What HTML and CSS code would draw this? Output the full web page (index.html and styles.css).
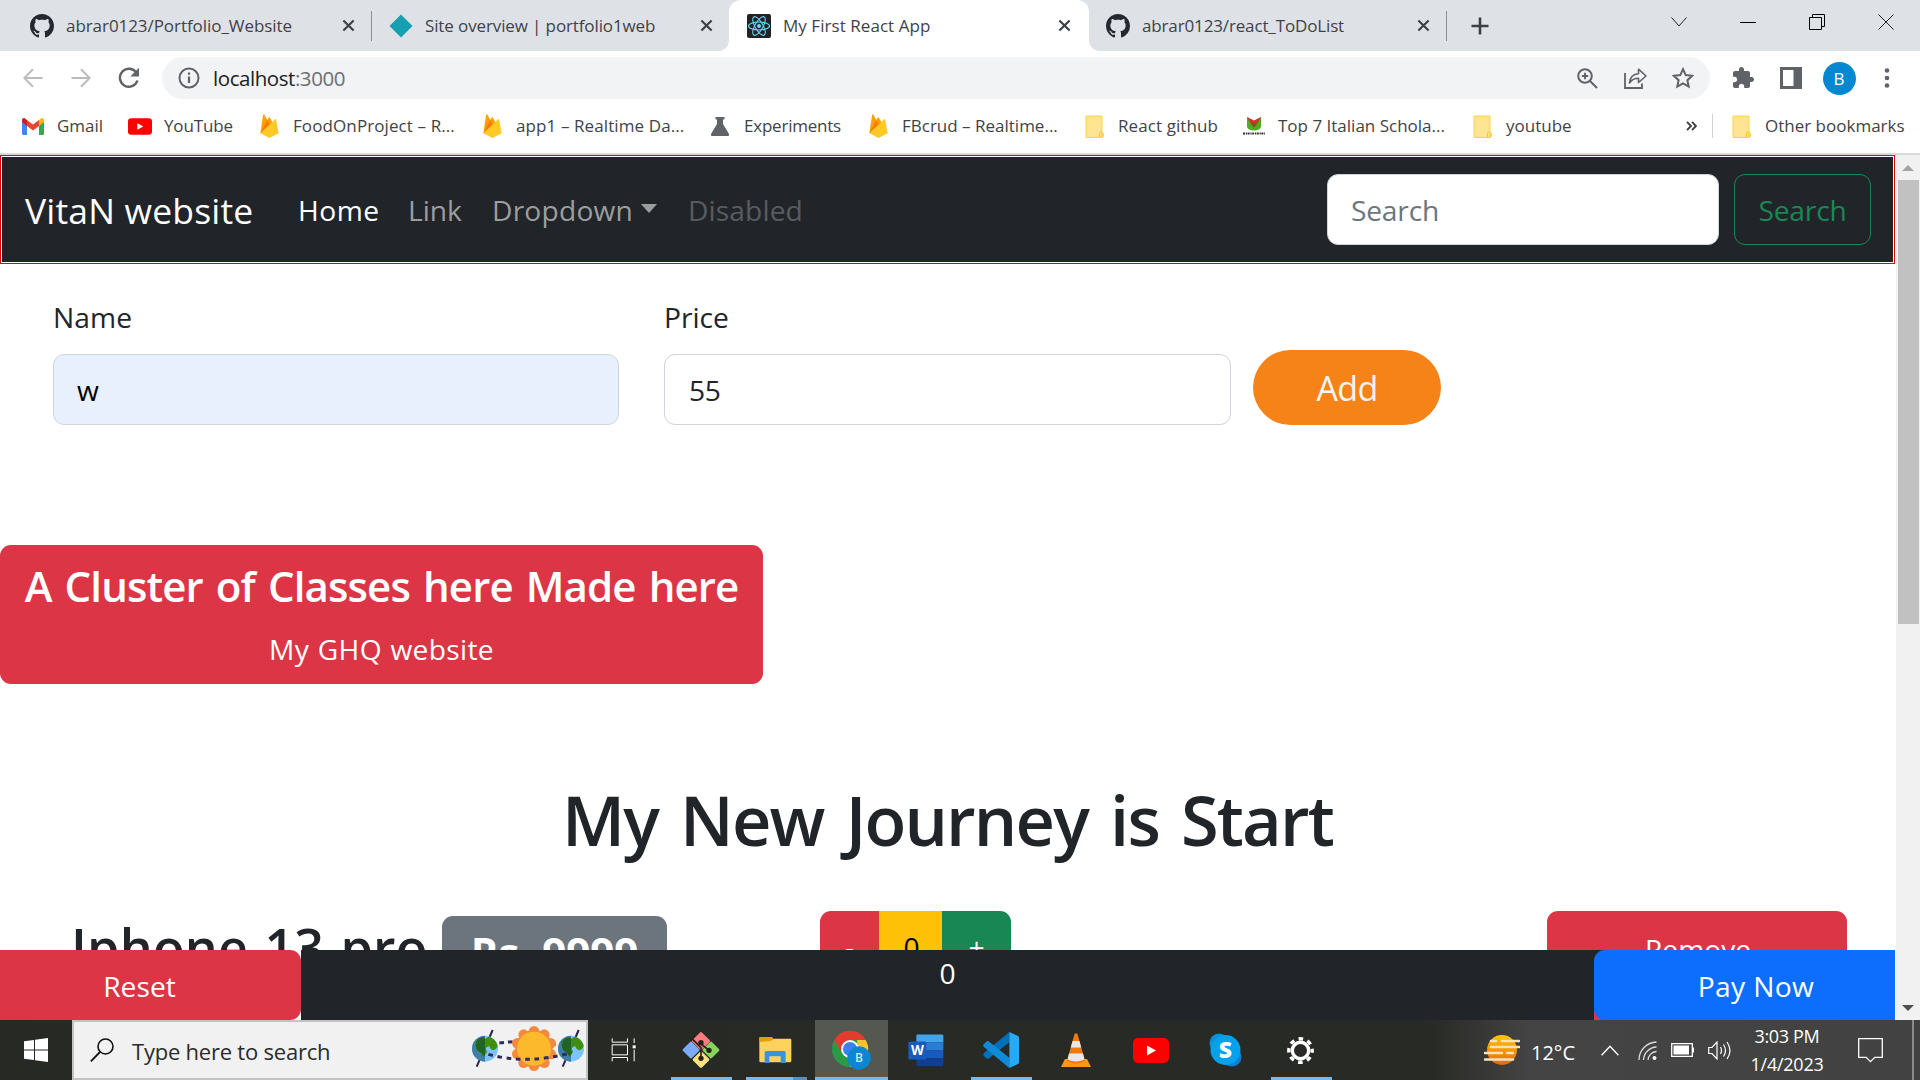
FILE: index.html
```html
<!DOCTYPE html>
<html lang="en">
<head>
<meta charset="utf-8">
<title>My First React App</title>
<link rel="stylesheet" href="styles.css">
</head>
<body>
<svg class="defs" aria-hidden="true">
  <symbol id="github" viewBox="0 0 16 16"><path fill="#24292f" d="M8 0C3.58 0 0 3.58 0 8c0 3.54 2.29 6.53 5.47 7.59.4.07.55-.17.55-.38 0-.19-.01-.82-.01-1.49-2.01.37-2.53-.49-2.69-.94-.09-.23-.48-.94-.82-1.13-.28-.15-.68-.52-.01-.53.63-.01 1.08.58 1.23.82.72 1.21 1.87.87 2.33.66.07-.52.28-.87.51-1.07-1.78-.2-3.64-.89-3.64-3.95 0-.87.31-1.59.82-2.15-.08-.2-.36-1.02.08-2.12 0 0 .67-.21 2.2.82.64-.18 1.32-.27 2-.27s1.36.09 2 .27c1.53-1.04 2.2-.82 2.2-.82.44 1.1.16 1.92.08 2.12.51.56.82 1.27.82 2.15 0 3.07-1.87 3.75-3.65 3.95.29.25.54.73.54 1.48 0 1.07-.01 1.93-.01 2.2 0 .21.15.46.55.38A8.01 8.01 0 0 0 16 8c0-4.42-3.58-8-8-8z"/></symbol>
  <symbol id="cross" viewBox="0 0 14 14"><path d="M1.5 1.5l11 11M12.500 1.500l-11 11" fill="none" stroke="#3c4043" stroke-width="2.300"/></symbol>
  <symbol id="firebase" viewBox="0 0 19 25"><path fill="#ffa000" d="M0 20L2.800 1c.2-.8 1-.9 1.400-.2l3 5.500L8.500 4c.4-.7 1-.7 1.400 0L19 20z"/><path fill="#f57c00" d="M10.500 12.500L7.200 6.300 0 20z"/><path fill="#ffca28" d="M19 20L16.500 6c-.2-.7-.9-.9-1.400-.4L0 20l8.400 4.600c.7.4 1.500.4 2.200 0z"/></symbol>
  <symbol id="folder" viewBox="0 0 19 23"><path fill="#ffe591" stroke="#fcd53f" d="M1 1h16v16.500c1.500 0 1.500 1 1.500 2V21c0 1-.6 1.500-1.500 1.500H1z"/><path fill="none" stroke="#f2c32c" d="M14.500 22v-3.500c0-2 2.500-2 2.500 0V22"/></symbol>
  <symbol id="youtube" viewBox="0 0 36 25"><rect width="36" height="25" rx="5" fill="#f00"/><path d="M14 7.500v10l9-5z" fill="#fff"/></symbol>
</svg>

<div class="screen">
  <header class="tabstrip">
    <div class="tab tab-1">
      <svg class="favicon"><use href="#github"/></svg><span class="tab-title">abrar0123/Portfolio_Website</span>
      <svg class="tab-close"><use href="#cross"/></svg><i class="tab-sep"></i>
    </div>
    <div class="tab tab-2">
      <svg class="favicon" viewBox="0 0 24 24"><path d="M12 0.500L23.500 12 12 23.500 0.500 12z" fill="#169fae"/></svg><span class="tab-title">Site overview | portfolio1web</span>
      <svg class="tab-close"><use href="#cross"/></svg>
    </div>
    <div class="tab tab-3 active">
      <svg class="favicon" viewBox="0 0 24 24"><rect width="24" height="24" rx="2" fill="#222"/><g fill="none" stroke="#61dafb" stroke-width="1.100"><ellipse cx="12" cy="12" rx="10.500" ry="4"/><ellipse cx="12" cy="12" rx="10.500" ry="4" transform="rotate(60 12 12)"/><ellipse cx="12" cy="12" rx="10.500" ry="4" transform="rotate(120 12 12)"/></g><circle cx="12" cy="12" r="2" fill="#61dafb"/></svg><span class="tab-title">My First React App</span>
      <svg class="tab-close"><use href="#cross"/></svg>
    </div>
    <div class="tab tab-4">
      <svg class="favicon"><use href="#github"/></svg><span class="tab-title">abrar0123/react_ToDoList</span>
      <svg class="tab-close"><use href="#cross"/></svg><i class="tab-sep"></i>
    </div>
    <svg class="new-tab" viewBox="0 0 18 18"><path d="M9 0.500v17M0.500 9h17" stroke="#3c4043" stroke-width="2.600"/></svg>
    <div class="window-buttons">
      <svg width="16" height="10" viewBox="0 0 16 10"><path d="M.5.5L8 9 15.500.5" fill="none" stroke="#222"/></svg>
      <svg width="16" height="10" viewBox="0 0 16 10"><path d="M0 5.500h16" stroke="#000"/></svg>
      <svg width="16" height="16" viewBox="0 0 16 16"><path d="M.5 3.500h12v12H.5zM3.500 3.500v-3h12v12h-3" fill="none" stroke="#000"/></svg>
      <svg width="16" height="16" viewBox="0 0 16 16"><path d="M.5.5l15 15M15.500.5l-15 15" stroke="#222"/></svg>
    </div>
  </header>

  <div class="toolbar">
    <div class="slot"><svg width="20" height="20" viewBox="0 0 20 20"><path d="M19.500 10H1.500M10 1.200L1.300 10 10 18.800" fill="none" stroke="#babcbe" stroke-width="2"/></svg></div>
    <div class="slot"><svg width="20" height="20" viewBox="0 0 20 20"><path d="M.5 10h18M10 1.200l8.700 8.800-8.700 8.800" fill="none" stroke="#babcbe" stroke-width="2"/></svg></div>
    <div class="slot"><svg width="22" height="22" viewBox="0 0 22 22"><path d="M18.600 6A9 9 0 1 0 19.500 13.500" fill="none" stroke="#5f6368" stroke-width="2.400"/><path d="M21 .8v8.700h-8.700z" fill="#5f6368"/></svg></div>
    <div class="omnibox">
      <svg width="22" height="22" viewBox="0 0 22 22"><circle cx="11" cy="11" r="9.500" fill="none" stroke="#5f6368" stroke-width="2"/><path d="M11 9.500v6.500M11 5.500v2.300" stroke="#5f6368" stroke-width="2.200"/></svg>
      <span class="url">localhost<span class="port">:3000</span></span>
      <div class="slot push"><svg width="21" height="21" viewBox="0 0 21 21"><circle cx="8" cy="8" r="6.800" fill="none" stroke="#5f6368" stroke-width="2"/><path d="M8 4.800v6.400M4.800 8h6.400M13 13l7 7" stroke="#5f6368" stroke-width="1.900"/></svg></div>
      <div class="slot"><svg width="23" height="22" viewBox="0 0 23 22"><path d="M1 6v15h17v-4.500" fill="none" stroke="#5f6368" stroke-width="1.800"/><path d="M5.500 16c.5-5.500 3.500-9 9-9.300V2.200L22 9l-7.500 6.500v-4.200c-4 0-6.800 1.500-9 4.700z" fill="none" stroke="#5f6368" stroke-width="1.600" stroke-linejoin="round"/></svg></div>
      <div class="slot"><svg width="22" height="22" viewBox="0 0 22 22"><path d="M11 2.200l2.700 5.900 6.500.7-4.800 4.400 1.300 6.400L11 16.300l-5.700 3.300 1.300-6.400L1.800 8.800l6.500-.7z" fill="none" stroke="#5f6368" stroke-width="2"/></svg></div>
    </div>
    <div class="slot first"><svg width="24" height="24" viewBox="0 0 24 24"><path fill="#5f6368" d="M20.500 11H19V7c0-1.100-.9-2-2-2h-4V3.500C13 2.120 11.880 1 10.500 1S8 2.120 8 3.500V5H4c-1.100 0-1.990.9-1.990 2v3.800H3.500c1.490 0 2.700 1.210 2.700 2.700s-1.210 2.700-2.700 2.700H2V20c0 1.100.9 2 2 2h3.800v-1.500c0-1.490 1.210-2.700 2.700-2.700 1.490 0 2.700 1.210 2.700 2.700V22H17c1.100 0 2-.9 2-2v-4h1.500c1.380 0 2.500-1.120 2.500-2.500S21.880 11 20.500 11z"/></svg></div>
    <div class="slot"><svg width="22" height="22" viewBox="0 0 22 22"><path d="M0 0h22v22H0zM3 3v16h10.500V3z" fill="#5f6368" fill-rule="evenodd"/></svg></div>
    <div class="slot"><span class="avatar">B</span></div>
    <div class="slot"><svg width="6" height="20" viewBox="0 0 6 20"><g fill="#5f6368"><circle cx="3" cy="2.500" r="2.300"/><circle cx="3" cy="10" r="2.300"/><circle cx="3" cy="17.500" r="2.300"/></g></svg></div>
  </div>

  <nav class="bookmarks">
    <a class="bm bm-wide"><svg width="22" height="17" viewBox="0 0 22 17"><path fill="#4285f4" d="M0 3l5 3.500V17H1.500A1.500 1.500 0 0 1 0 15.500z"/><path fill="#34a853" d="M22 3l-5 3.500V17h3.500a1.500 1.500 0 0 0 1.500-1.500z"/><path fill="#fbbc04" d="M17 2l2-1.500c1.300-1 3 0 3 1.700V4l-5 4z"/><path fill="#c5221f" d="M5 2L3 .5C1.700-.5 0 .5 0 2.200V4l5 4z"/><path fill="#ea4335" d="M5 2l6 4.600L17 2v6l-6 4.500L5 8z"/></svg><span>Gmail</span></a>
    <a class="bm bm-yt"><svg width="24" height="17"><use href="#youtube"/></svg><span>YouTube</span></a>
    <a class="bm bm-food"><svg width="19" height="24"><use href="#firebase"/></svg><span>FoodOnProject – R...</span></a>
    <a class="bm bm-food"><svg width="19" height="24"><use href="#firebase"/></svg><span>app1 – Realtime Da...</span></a>
    <a class="bm bm-exp"><svg width="18" height="19" viewBox="0 0 18 19"><path d="M4.500 0h9v2.500H12V7l6 10c.5 1.200 0 2-1.200 2H1.200C0 19-.5 18.200 0 17L6 7V2.500H4.500z" fill="#5f6368"/></svg><span>Experiments</span></a>
    <a class="bm"><svg width="19" height="24"><use href="#firebase"/></svg><span>FBcrud – Realtime...</span></a>
    <a class="bm bm-react"><svg width="19" height="23"><use href="#folder"/></svg><span>React github</span></a>
    <a class="bm bm-top"><svg width="24" height="20" viewBox="0 0 24 20"><path d="M5 1l7 4 7-4v9c0 3-3 4.500-7 4.500S5 13 5 10z" fill="#4caf22"/><path d="M5 1l7 3.500L19 1l-4 7-3 4-3-4z" fill="#d9302c"/><path d="M9 6l3 2 3-2-3 5z" fill="#2b7a12"/><path d="M1 17.500h22" stroke="#333" stroke-width="2" stroke-dasharray="2 .8 1.200 .6"/></svg><span>Top 7 Italian Schola...</span></a>
    <a class="bm"><svg width="19" height="23"><use href="#folder"/></svg><span>youtube</span></a>
    <svg class="more" width="11" height="10" viewBox="0 0 11 10"><path d="M1 .8L5 5 1 9.200M6 .8L10 5 6 9.200" fill="none" stroke="#3c4043" stroke-width="1.900"/></svg>
    <i class="bm-sep"></i>
    <a class="bm"><svg width="19" height="23"><use href="#folder"/></svg><span>Other bookmarks</span></a>
  </nav>

  <main class="viewport">
    <div class="page">
      <div class="scroll-area">
        <nav class="navbar">
          <div class="navbar-inner">
            <a class="brand">VitaN website</a>
            <a class="nav-link nav-home">Home</a>
            <a class="nav-link nav-plain">Link</a>
            <a class="nav-link nav-drop">Dropdown<i class="caret"></i></a>
            <a class="nav-link nav-disabled">Disabled</a>
            <div class="search-input">Search</div>
            <div class="search-button">Search</div>
          </div>
        </nav>
        <form class="add-form">
          <div class="field"><label class="lbl-name">Name</label><div class="control autofilled">w</div></div>
          <div class="field"><label>Price</label><div class="control">55</div></div>
          <div class="add-button">Add</div>
        </form>
        <div class="banner">
          <h4>A Cluster of Classes here Made here</h4>
          <p>My GHQ website</p>
        </div>
        <h1>My New Journey is Start</h1>
        <div class="product">
          <h2>Iphone 13 pro</h2>
          <span class="badge">Rs. 9999</span>
          <div class="stepper"><span class="minus">-</span><span class="count">0</span><span class="plus">+</span></div>
          <div class="remove">Remove</div>
        </div>
      </div>
      <footer class="totals">
        <div class="reset-wrap"><div class="reset">Reset</div></div>
        <div class="sum">0</div>
        <div class="pay-wrap"><div class="pay">Pay Now</div></div>
      </footer>
    </div>
    <div class="scrollbar"><i class="arrow-up"></i><i class="thumb"></i><i class="arrow-down"></i></div>
  </main>

  <footer class="taskbar">
    <div class="start"><svg width="24" height="24" viewBox="0 0 24 24"><path fill="#fff" d="M0 3.300L10 2v9.400H0zM11 1.800L24 0v11.400H11zM0 12.500h10V22L0 20.700zM11 12.500h13V24l-13-1.800z"/></svg></div>
    <div class="tb-search">
      <svg width="24" height="24" viewBox="0 0 24 24"><circle cx="15.500" cy="8.500" r="7.500" fill="none" stroke="#111" stroke-width="1.600"/><path d="M10 14L.8 23.300" stroke="#111" stroke-width="1.800"/></svg>
      <span>Type here to search</span>
      <svg class="solstice" width="125" height="56" viewBox="0 6 375 168">
        <path d="M118 69q104-14 210 12" fill="none" stroke="#302b5c" stroke-width="9" stroke-dasharray="14 12"/>
        <g fill="#f58a3c"><circle cx="222" cy="86" r="56"/><circle cx="222" cy="34" r="16"/><circle cx="253" cy="44" r="16"/><circle cx="272" cy="70" r="16"/><circle cx="272" cy="102" r="16"/><circle cx="253" cy="128" r="16"/><circle cx="222" cy="137" r="16"/><circle cx="191" cy="128" r="16"/><circle cx="172" cy="102" r="16"/><circle cx="172" cy="70" r="16"/><circle cx="191" cy="44" r="16"/></g>
        <circle cx="222" cy="86" r="51" fill="#fcb92c"/>
        <g id="earth"><path d="M98 30L50 140" stroke="#25204f" stroke-width="6"/><circle cx="75" cy="86" r="39" fill="#7cc4ff"/><path d="M75 47a39 39 0 0 0 0 78z" fill="#3f7fa6"/><path d="M52 60c10-10 20-10 24-4l10-6c14 2 25 16 27 28-4 10-12 16-20 10l-6-10-10 6 4 12-10 14-8-12-10-6c-6-8-8-22-1-32z" fill="#3f8f0c"/><path d="M52 60c10-10 18-10 23-5v50l-4 5-8-12-10-6c-6-8-8-22-1-32z" fill="#226423"/></g>
        <use href="#earth" x="258"/>
        <path d="M85 103q115 32 250-5" fill="none" stroke="#302b5c" stroke-width="9" stroke-dasharray="14 14"/>
      </svg>
    </div>
    <div class="task-view"><svg width="26" height="26" viewBox="454 50 78 78"><path d="M457.500 54v11.500h46V54M457.500 123v-11.500h46V123M457.500 73.500h46v30h-46zM523.500 54v14M523.500 88v35" fill="none" stroke="#fff" stroke-width="3"/><path d="M519 75h9v9h-9z" fill="#fff"/></svg></div>
    <div class="app open"><svg width="38" height="38" viewBox="666 33 114 114"><g stroke-width="8" stroke-linejoin="round"><path d="M723 40l23 23-23 23-23-23z" fill="#ff7b7f" stroke="#ff7b7f"/><path d="M693 69l21 21-21 21-21-21z" fill="#7cabfb" stroke="#7cabfb"/><path d="M753 69l21 21-21 21-21-21z" fill="#85d45e" stroke="#85d45e"/><path d="M723 98l21 21-21 21-21-21z" fill="#ffe27d" stroke="#ffe27d"/></g><path d="M704 48l-8 8 27 27v36M716 66l31 25" fill="none" stroke="#27221c" stroke-width="5"/><g fill="#27221c"><circle cx="723" cy="68" r="8"/><circle cx="747" cy="91" r="8"/><circle cx="723" cy="115" r="8"/></g></svg></div>
    <div class="app open multi"><svg width="33" height="30" viewBox="59 45 99 90"><path d="M60 55q0-4 4-4h30q5 0 7 5h52q3 0 3 3v64q0 4-4 4H64q-4 0-4-4z" fill="#ffd35b"/><path d="M60 66V55q0-4 4-4h30q5 0 8 6-4 6-10 6z" fill="#e39d0a"/><path d="M76 129V98q0-5 5-5h53q5 0 5 5v31h-15v-20H90v20z" fill="#3794e0"/></svg></div>
    <div class="app current"><svg width="42" height="42" viewBox="273 30 126 126"><circle cx="333" cy="90" r="54" fill="#2a9a44"/><path d="M286 63a54 54 0 0 1 94 0H333l-24 40z" fill="#e33b2e"/><path d="M380 63a54 54 0 0 1-47 81l24-41-3-40z" fill="#fcc42c"/><circle cx="333" cy="90" r="27" fill="#fff"/><circle cx="333" cy="90" r="21" fill="#3b7ff0"/><circle cx="360" cy="117" r="35" fill="#0b86d2"/><text x="360" y="130" class="mini-b">B</text></svg></div>
    <div class="app"><svg width="38" height="35" viewBox="500 38 114 104"><path d="M532 42h73q4 0 4 4v20h-81V46q0-4 4-4z" fill="#41a5ee"/><path d="M528 66h81v24h-81z" fill="#2b7cd3"/><path d="M528 90h81v23h-81z" fill="#185abd"/><path d="M528 113h81v20q0 4-4 4h-73q-4 0-4-4z" fill="#103f91"/><rect x="504" y="63" width="54" height="54" rx="4" fill="#185abd"/><text x="531" y="104" class="word-w">W</text></svg></div>
    <div class="app open"><svg width="38" height="38" viewBox="726 33 114 114"><path d="M808 36v31l-62 49q-4 2-7-1l-8-8q-3-4 0-7z" fill="#0070b8"/><path d="M808 144v-31l-62-49q-4-2-7 1l-8 8q-3 4 0 7z" fill="#108bd8"/><path d="M808 36l26 12q3 2 3 6v72q0 4-3 6l-26 12z" fill="#27a9f4"/></svg></div>
    <div class="app"><svg width="30" height="34" viewBox="0 0 30 34"><path d="M4 26h22l4 8H0z" fill="#f99a17"/><path d="M13.500 1q1.500-1.500 3 0L24 28q-9 5-18 0z" fill="#f27a0a"/><path d="M11.600 8h6.800l1.900 6.500H9.700zM8 20.500h14l1.500 6q-8.500 4-17 0z" fill="#e8e8e8"/></svg></div>
    <div class="app"><svg width="36" height="25"><use href="#youtube"/></svg></div>
    <div class="app"><svg width="33" height="34" viewBox="0 0 33 34"><circle cx="10" cy="10" r="9.500" fill="#0a8fd8"/><circle cx="23" cy="24" r="9.500" fill="#0a7fd8"/><circle cx="16.500" cy="17" r="15" fill="#03a2ea"/><text x="16.500" y="25" class="skype-s">S</text></svg></div>
    <div class="app open"><svg width="27" height="27" viewBox="0 0 27 27"><circle cx="13.500" cy="13.500" r="8.200" fill="none" stroke="#fff" stroke-width="3.400"/><circle cx="13.500" cy="13.500" r="11.700" fill="none" stroke="#fff" stroke-width="3.400" stroke-dasharray="4.600 4.590" stroke-dashoffset="2.300"/></svg></div>
    <div class="tray">
      <svg width="36" height="32" viewBox="0 0 36 32"><defs><linearGradient id="dusk" x2="0" y2="1"><stop stop-color="#fdc60a"/><stop offset="1" stop-color="#ec6608"/></linearGradient></defs><circle cx="18" cy="16" r="15" fill="url(#dusk)"/><path d="M7 7h5M18 7h17M7 13h28M1 19h17M23 19h6M1 25.500h28" stroke="#f6e3b8" stroke-width="2.600" stroke-linecap="round"/></svg>
      <span class="temp">12°C</span>
      <svg width="18" height="11" viewBox="0 0 18 11"><path d="M.6 10.300L9 1.200l8.400 9.100" fill="none" stroke="#fff" stroke-width="1.400"/></svg>
      <svg width="19" height="19" viewBox="0 0 19 19"><g fill="none" stroke="#ddd" stroke-width="1.300"><path d="M1 19A18 18 0 0 1 18.500 1"/><path d="M5.500 19A13.500 13.500 0 0 1 18.500 6"/><path d="M10 19a9 9 0 0 1 8.500-8.500"/></g><circle cx="16.500" cy="17" r="2" fill="#fff"/></svg>
      <svg width="23" height="14" viewBox="0 0 23 14"><path d="M.7.7h20.600v12.600H.7zM22.400 4.500v5" fill="none" stroke="#fff" stroke-width="1.300"/><path d="M2.500 2.500H18v9H2.500z" fill="#fff"/></svg>
      <svg width="24" height="19" viewBox="0 0 24 19"><path d="M.7 6.500H4l5-5.500v17l-5-5.500H.7zM12.500 6q2 3.500 0 7M15.500 3.500q4 6 0 12M19 1q6 8.500 0 17" fill="none" stroke="#fff" stroke-width="1.200"/></svg>
      <div class="clock"><span class="time">3:03 PM</span><span class="date">1/4/2023</span></div>
      <svg width="25" height="25" viewBox="0 0 25 25"><path d="M.7.7h23.600v18.600h-7.500l-4.300 4.300-4.300-4.300H.7z" fill="none" stroke="#fff" stroke-width="1.300"/></svg>
      <i class="desktop-edge"></i>
    </div>
  </footer>
</div>
</body>
</html>
```
FILE: styles.css
```css
* { box-sizing: border-box; }
body { margin: 0; background: #fff; font-family: "Open Sans", "Noto Sans", sans-serif; color: #212529; }
h1, h2, h4, p { margin: 0; }
svg { display: block; flex: none; }
.defs { position: absolute; width: 0; height: 0; }
.screen { width: 1920px; height: 1080px; overflow: hidden; display: flex; flex-direction: column; white-space: nowrap; }

/* Tab strip */
.tabstrip { height: 51px; display: flex; background: #dee1e6; flex: none; align-items: center; }
.tab { height: 51px; display: flex; align-items: center; color: #3f4347; font-size: 17px; position: relative; }
.tab-1 { width: 372px; padding-left: 30px; letter-spacing: -.06px; }
.tab-2 { width: 357px; padding-left: 17px; letter-spacing: -.12px; }
.tab-3 { width: 360px; padding-left: 18px; letter-spacing: .05px; }
.tab-4 { width: 358px; padding-left: 17px; letter-spacing: -.14px; }
.favicon { width: 24px; height: 24px; }
.tab-title { flex: 1; padding-left: 12px; }
.tab-close { width: 13px; height: 13px; margin-right: 16px; }
.tab-sep { width: 1px; height: 30px; background: #8b8f94; }
.tab.active { background: #fff; border-radius: 12px 12px 0 0; }
.active::before, .active::after { content: ""; position: absolute; bottom: 0; width: 10px; height: 10px; }
.active::before { left: -10px; background: radial-gradient(circle at 0 0, #dee1e6 9.5px, #fff 10px); }
.active::after { right: -10px; background: radial-gradient(circle at 100% 0, #dee1e6 9.5px, #fff 10px); }
.tab-3 .tab-close { margin-right: 18px; }
.new-tab { width: 18px; height: 18px; margin-left: 24px; }
.window-buttons { margin: -8px 0 0 auto; display: grid; grid-template-columns: repeat(4, 69px); width: 276px; align-items: center; justify-items: center; }

/* Toolbar */
.toolbar { height: 48px; padding: 6px 0 0 9px; display: flex; flex: none; }
.slot { width: 48px; height: 42px; display: flex; align-items: center; justify-content: center; flex: none; }
.slot.first { margin-left: 9px; }
.push { margin-left: auto; }
.omnibox { width: 1548px; height: 42px; margin-left: 9px; padding: 0 3px 0 16px; border-radius: 21px; background: #f1f3f4; display: flex; align-items: center; }
.url { font-size: 20.5px; letter-spacing: -.44px; padding-left: 13px; color: #202124; }
.port { color: #6b6f73; }
.avatar { width: 33px; height: 33px; border-radius: 50%; background: #0288d1; color: #fff; font-size: 17px; line-height: 33px; text-align: center; }

/* Bookmarks bar */
.bookmarks { height: 56px; flex: none; padding-left: 22px; border-bottom: 2px solid #dadada; display: grid; align-items: center; grid-template-columns: 106px 132px 223px 228px 158px 216px 157px 231px 213px 26px 20px 1fr; color: #3f4347; font-size: 17px; }
.bm { display: grid; grid-template-columns: 33px auto; justify-content: start; align-items: center; }
.bm span { margin-top: -2px; }
.bm-wide { grid-template-columns: 35px auto; }
.bm-yt { grid-template-columns: 36px auto; letter-spacing: -.13px; }
.bm-food { letter-spacing: .1px; }
.bm-exp { letter-spacing: -.22px; }
.bm-react { letter-spacing: .09px; }
.bm-top { grid-template-columns: 36px auto; }
.bm-sep { width: 1px; height: 24px; background: #cfd1d4; }

/* Web page */
.viewport { height: 865px; flex: none; display: flex; }
.page { width: 1896px; display: flex; flex-direction: column; }
.scroll-area { height: 795px; overflow: hidden; font-size: 28.2px; }
.navbar { width: 1895px; height: 109px; border: 1px solid #e60000; padding: 1px; }
.navbar-inner { height: 105px; background: #212529; display: flex; align-items: center; padding: 0 22px 0 23px; }
.brand { width: 273px; color: #fff; font-size: 35.5px; letter-spacing: .18px; }
.nav-home { width: 110px; color: #fff; letter-spacing: .45px; }
.nav-plain { width: 84px; color: #9b9d9e; }
.nav-drop { width: 196px; color: #9b9d9e; letter-spacing: .2px; display: flex; align-items: center; }
.caret { border: 8.5px solid transparent; border-top: 9px solid #9b9d9e; border-bottom: 0; margin: -3px 0 0 8px; }
.nav-disabled { color: #595c5f; letter-spacing: .11px; }
.search-input, .search-button { height: 71px; line-height: 71px; border-radius: 11px; letter-spacing: -.21px; }
.search-input { width: 392px; margin-left: auto; background: #fff; border: 1px solid #ced4da; color: #6c757d; padding-left: 23px; }
.search-button { width: 137px; margin-left: 15px; border: 1px solid #198754; color: #198754; text-align: center; }

.add-form { display: flex; padding: 34px 0 0 53px; align-items: flex-end; }
.field { width: 566px; margin-right: 45px; }
.field + .field { width: 567px; margin-right: 22px; }
.field label { display: block; height: 40px; line-height: 38px; margin-bottom: 16px; }
.lbl-name { letter-spacing: .1px; }
.control { height: 71px; line-height: 70px; border: 1px solid #ced4da; border-radius: 11px; padding-left: 24px; letter-spacing: -.4px; }
.autofilled { background: #e8f0fe; color: #000; padding-left: 23px; }
.add-button { width: 188px; height: 75px; line-height: 77px; border-radius: 38px; background: #f58318; color: #f4f4f4; font-size: 34px; letter-spacing: -.7px; text-align: center; }

.banner { width: 763px; height: 139px; margin-top: 120px; padding-top: 15px; border-radius: 11px; background: #dc3545; color: #fff; text-align: center; }
.banner h4 { height: 51px; line-height: 51px; font-size: 42px; font-weight: 600; letter-spacing: -.88px; word-spacing: 3px; }
.banner p { margin-top: 17px; line-height: 42px; letter-spacing: .3px; word-spacing: 1px; }
h1 { width: 1895px; margin-top: 94px; line-height: 84px; text-align: center; font-size: 68.5px; font-weight: 600; letter-spacing: -1.8px; word-spacing: 6px; }

.product { margin-top: 49px; height: 100px; display: flex; align-items: flex-start; padding-left: 71px; }
h2 { width: 371px; line-height: 71px; font-size: 52px; font-weight: 600; letter-spacing: .2px; word-spacing: 2.5px; }
.badge { width: 225px; height: 74px; line-height: 72px; margin-top: 5px; border-radius: 11px; background: #6c757d; color: #fff; font-size: 42px; font-weight: 700; text-align: center; }
.stepper { width: 191px; margin-left: 153px; display: flex; border-radius: 11px; overflow: hidden; line-height: 73px; text-align: center; color: #fff; }
.minus { width: 59px; line-height: 70px; background: #dc3545; }
.count { width: 63px; padding-left: 2px; background: #ffc107; color: #000; }
.plus { width: 69px; background: #198754; }
.remove { width: 300px; height: 84px; line-height: 76px; margin-left: 536px; padding-left: 2px; border-radius: 11px; background: #dc3545; color: #fff; text-align: center; }

.totals { height: 70px; display: flex; background: #212529; color: #fff; font-size: 28.2px; text-align: center; width: 1895px; }
.reset-wrap { width: 301px; background: #fff; }
.reset { height: 70px; line-height: 72px; padding-right: 22px; border-radius: 0 11px 11px 0; background: #dc3545; }
.sum { flex: 1; line-height: 46px; }
.pay-wrap { width: 301px; background: linear-gradient(#212529 50%, #dc3545 50%); }
.pay { height: 70px; line-height: 72px; padding-left: 23px; border-radius: 11px 0 0 11px; background: #0d6efd; letter-spacing: .35px; }

.scrollbar { width: 24px; height: 865px; background: #f1f1f1; display: flex; flex-direction: column; align-items: center; }
.arrow-up { border: 6px solid transparent; border-bottom: 6px solid #a3a3a3; border-top: 0; margin: 10px 0 9px; }
.thumb { width: 21px; height: 444px; background: #c1c1c1; }
.arrow-down { border: 6px solid transparent; border-top: 6px solid #505050; border-bottom: 0; margin: auto 0 9px; }

/* Taskbar */
.taskbar { height: 60px; flex: none; display: flex; align-items: center; background: linear-gradient(90deg, #272924 0, #282a25 1430px, #444 1530px, #424242 100%); color: #fff; }
.start { width: 72px; display: flex; justify-content: center; }
.tb-search { width: 516px; height: 60px; border: 2px solid #c3c3c3; background: #f1f1f1; display: flex; align-items: center; padding-left: 16px; color: #2b2b2b; font-size: 22px; letter-spacing: -.22px; }
.tb-search span { padding: 2px 0 0 18px; }
.solstice { margin-left: auto; margin-right: 1px; }
.task-view { width: 75px; display: flex; justify-content: center; padding-right: 3px; }
.app { width: 75px; height: 60px; display: flex; align-items: center; justify-content: center; position: relative; }
.open::after, .current::after { content: ""; position: absolute; left: 8px; bottom: 0; width: 61px; height: 3px; background: #76b9ed; }
.multi::after { background: linear-gradient(90deg, #76b9ed 47px, #5c8fb8 47px); }
.current { background: linear-gradient(#555751, #555751) 2px 0 / 73px 60px no-repeat; }
.current::after { left: 2px; width: 73px; }
.mini-b { font-size: 36px; fill: #cfe6f5; text-anchor: middle; font-weight: 600; }
.word-w { font-size: 40px; fill: #fff; text-anchor: middle; font-weight: 700; }
.skype-s { font-size: 23px; fill: #fff; text-anchor: middle; font-weight: 800; }
.tray { margin-left: auto; width: 440px; height: 60px; display: grid; grid-template-columns: 43px 60px 53px 23px 46px 29px 106px 60px 20px; align-items: center; justify-items: center; }
.temp { font-size: 20px; padding-top: 5px; }
.clock { display: grid; text-align: center; line-height: 28px; font-size: 18px; padding-bottom: 1px; }
.time { letter-spacing: -.33px; }
.date { letter-spacing: -.24px; }
.desktop-edge { width: 2px; height: 60px; background: #8a8a8a; margin-left: 6px; }
```
